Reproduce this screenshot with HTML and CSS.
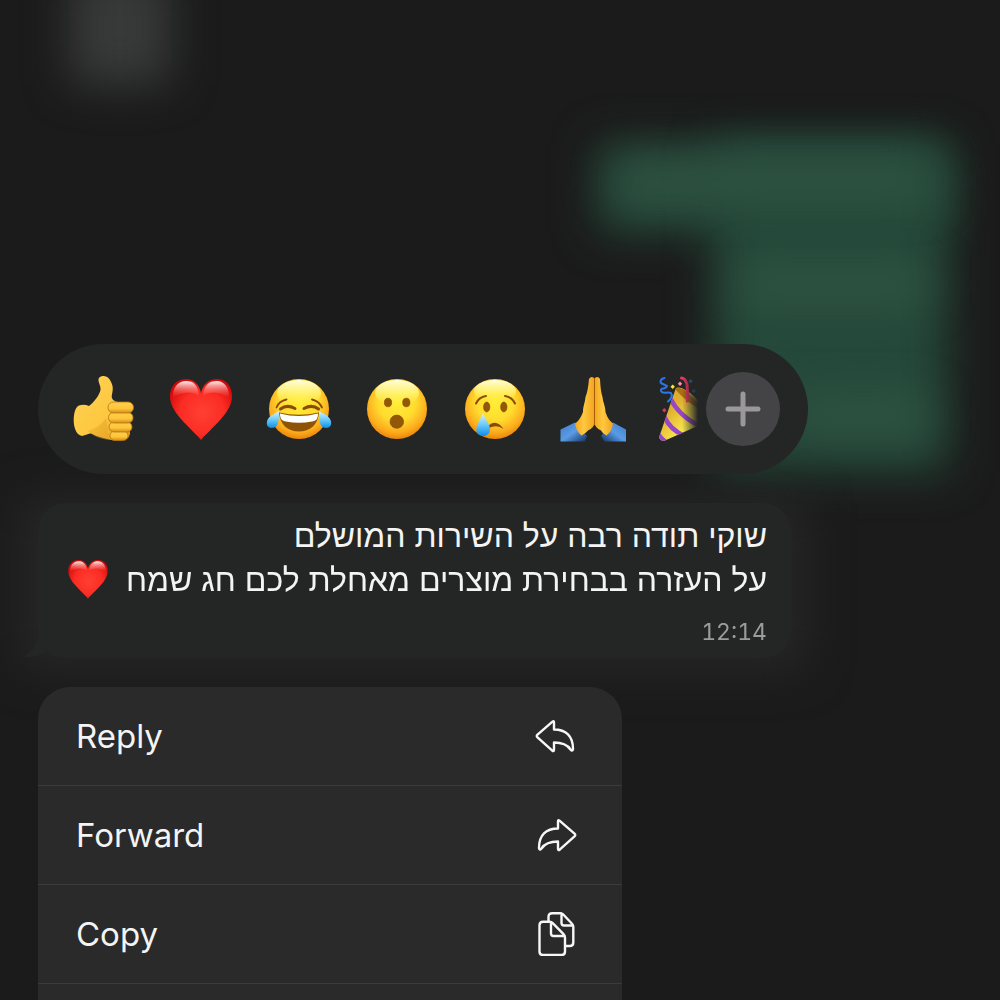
FILE: index.html
```html
<!DOCTYPE html>
<html lang="en">
<head>
<meta charset="utf-8">
<meta name="viewport" content="width=device-width, initial-scale=1">
<title>Message actions</title>
<link rel="stylesheet" href="styles.css">
</head>
<body>
<div class="backdrop" aria-hidden="true">
  <div class="blur blur-grey"></div>
  <div class="blur blur-sent blur-sent-wide"></div>
  <div class="blur blur-sent blur-sent-tall"></div>
  <div class="blur blur-band blur-band-one"></div>
  <div class="blur blur-band blur-band-two"></div>
  <div class="blur blur-band blur-band-three"></div>
  <div class="blur blur-message"></div>
</div>

<svg class="defs" aria-hidden="true">
  <defs>
    <radialGradient id="face" cx=".5" cy=".38" r=".64">
      <stop offset="0" stop-color="#ffee38"/><stop offset=".5" stop-color="#ffdb2e"/><stop offset=".8" stop-color="#fcab1c"/><stop offset="1" stop-color="#ea7d08"/>
    </radialGradient>
    <linearGradient id="shine" x1="0" y1="0" x2="0" y2="1">
      <stop offset="0" stop-color="#fffee0"/><stop offset=".5" stop-color="#fff98a" stop-opacity=".7"/><stop offset="1" stop-color="#fff04a" stop-opacity="0"/>
    </linearGradient>
    <linearGradient id="tear" x1="0" y1="0" x2="0" y2="1">
      <stop offset="0" stop-color="#d5f6ff"/><stop offset=".5" stop-color="#6ecbf8"/><stop offset="1" stop-color="#0a8fe8"/>
    </linearGradient>
    <radialGradient id="red" cx=".52" cy=".55" r=".6">
      <stop offset="0" stop-color="#ff4034"/><stop offset=".6" stop-color="#fb2c24"/><stop offset="1" stop-color="#d40808"/>
    </radialGradient>
    <linearGradient id="gloss" x1="0" y1="0" x2="0" y2="1">
      <stop offset="0" stop-color="#fff" stop-opacity=".95"/><stop offset="1" stop-color="#ff6a60" stop-opacity="0"/>
    </linearGradient>
    <linearGradient id="skin" x1="0" y1="0" x2="1" y2="1">
      <stop offset="0" stop-color="#ffd257"/><stop offset=".6" stop-color="#fdc840"/><stop offset="1" stop-color="#dd930f"/>
    </linearGradient>
    <linearGradient id="finger" x1="0" y1="0" x2="0" y2="1">
      <stop offset="0" stop-color="#ffd04a"/><stop offset=".6" stop-color="#fdc53b"/><stop offset="1" stop-color="#d58b12"/>
    </linearGradient>
    <linearGradient id="palm" x1="0" y1="0" x2="1" y2="0">
      <stop offset="0" stop-color="#f3a51c"/><stop offset=".45" stop-color="#ffc841"/><stop offset="1" stop-color="#f2a41c"/>
    </linearGradient>
    <linearGradient id="sleeve-left" x1="0" y1="0" x2="1" y2="1">
      <stop offset="0" stop-color="#3f7cc6"/><stop offset=".5" stop-color="#5a9be6"/><stop offset="1" stop-color="#12305f"/>
    </linearGradient>
    <linearGradient id="sleeve-right" x1="1" y1="0" x2="0" y2="1">
      <stop offset="0" stop-color="#3f7cc6"/><stop offset=".5" stop-color="#5a9be6"/><stop offset="1" stop-color="#12305f"/>
    </linearGradient>
    <linearGradient id="cone" x1="0" y1="0" x2="1" y2="1">
      <stop offset="0" stop-color="#d49a24"/><stop offset=".35" stop-color="#e0b030"/><stop offset=".65" stop-color="#fff052"/><stop offset="1" stop-color="#c48d1c"/>
    </linearGradient>
    <clipPath id="cone-shape"><path d="M1.500 60 L17.500 13 C20 9 30 14 40 24 C51 35 55 43 49 46 L7 64.500 C3 65.500 .5 63 1.500 60Z"/></clipPath>
    <symbol id="heart" viewBox="0 0 66 66">
      <path fill="url(#red)" d="M33 64 C31 61 22 53 13 43 C6 35 2 28 2 20 C2 10 9 3 18 3 C26 3 31 8 33 17 C35 8 41 3 49 3 C58 3 64 10 64 20 C64 28 60 35 53 43 C44 53 35 61 33 64Z"/>
      <path fill="url(#gloss)" d="M5 22 C4 12 10 5 18 5 C26 5 30 9 31 20 C24 14 12 16 5 22Z"/>
      <path fill="url(#gloss)" d="M61 22 C62 12 56 5 49 5 C41 5 36 9 35 20 C42 14 54 16 61 22Z"/>
    </symbol>
  </defs>
</svg>

<main class="page">
  <section class="reactions" aria-label="Reactions">
    <div class="reaction-list">
      <button class="reaction" type="button" aria-label="Thumbs up">
        <svg viewBox="0 0 66 66">
          <path fill="url(#skin)" d="M9 29.500 Q14 28 19 30 C24 26 29 20 30.500 14 C31 10 28.500 7 28.500 4 C28.500 1 31 0 33.500 0 C38 0 41 4 42.500 10 C43.500 15 41 20 42 22 Q43 25 48 26 L59 26 L60 58 Q59 64 50 64.500 C42 65 34 62 30 61 C25 60 23 57.500 20 57.500 L12 60 C1 58 2 32 9 29.500Z"/>
          <path fill="#e3a22a" opacity=".45" d="M18 55 Q29 52 36 42 L39 64 Q24 62 18 55Z"/>
          <g fill="url(#finger)" stroke="#b87312" stroke-width=".8">
            <rect x="40" y="55" width="18" height="9.500" rx="4.700"/><rect x="39" y="46" width="23" height="10" rx="5"/><rect x="38.500" y="36.500" width="24.500" height="10.500" rx="5"/><rect x="38" y="26" width="25.500" height="11" rx="5.400"/>
          </g>
        </svg>
      </button>
      <button class="reaction" type="button" aria-label="Heart"><svg viewBox="0 0 66 66"><use href="#heart"/></svg></button>
      <button class="reaction" type="button" aria-label="Tears of joy">
        <svg viewBox="0 0 66 66">
          <circle cx="33" cy="33" r="30" fill="url(#face)"/><ellipse cx="33" cy="17" rx="22" ry="13" fill="url(#shine)"/>
          <path fill="#8f5305" d="M13 36.500 Q33 41 53 36.500 C52 49 44 55.500 33 55.500 C22 55.500 14 49 13 36.500Z"/>
          <path fill="#fff" d="M14 37.500 Q33 42.500 52 37.500 C52 43 50 45 46 45.500 Q33 48 20 45.500 C16 45 14 43 14 37.500Z"/>
          <g fill="none" stroke="#8a4b06" stroke-linecap="round"><path stroke-width="3" d="M14.500 33 Q21 28 29 32.500 M38 32.500 Q46 28 52.500 33"/><path stroke-width="1.800" d="M10.500 31.500 Q13 25 20.500 23.500 M46 23.500 Q53 25 56 31.500"/></g>
          <path fill="url(#tear)" d="M13 35 C13 43 13 52 6 52 C0 52 0 46 2 43 C4 39 9 38 13 35Z"/><path fill="url(#tear)" d="M53 35 C53 43 53 52 60 52 C66 52 66 46 64 43 C62 39 57 38 53 35Z"/>
        </svg>
      </button>
      <button class="reaction" type="button" aria-label="Surprised">
        <svg viewBox="0 0 66 66">
          <circle cx="33" cy="33" r="30" fill="url(#face)"/><ellipse cx="33" cy="17" rx="22" ry="13" fill="url(#shine)"/>
          <g fill="#925807" stroke="#7c4503" stroke-width=".6"><ellipse cx="24" cy="26.500" rx="3.600" ry="4.300"/><ellipse cx="42.300" cy="26.500" rx="3.600" ry="4.300"/><ellipse cx="32.800" cy="45.700" rx="6.800" ry="6.600"/></g>
        </svg>
      </button>
      <button class="reaction" type="button" aria-label="Crying">
        <svg viewBox="0 0 66 66">
          <circle cx="33" cy="33" r="30" fill="url(#face)"/><ellipse cx="33" cy="15" rx="21" ry="11" fill="url(#shine)"/>
          <g fill="#925807" stroke="#7c4503" stroke-width=".5"><ellipse cx="24.700" cy="31" rx="3.200" ry="5"/><ellipse cx="41.800" cy="31" rx="3.200" ry="5"/></g>
          <path fill="none" stroke="#8a4b06" stroke-width="2" stroke-linecap="round" d="M14 27.500 Q17 21 24 20 M43 20 Q50 21 53 27.500"/>
          <path fill="#8a4b06" d="M26 50 Q34 42 41.500 53 Q35 48 27 52Z"/>
          <path fill="url(#tear)" d="M21 37 C23 43 28 48 28 53.500 C28 57.500 25 60 21.200 60 C17.500 60 14.300 57.500 14.300 53.500 C14.300 48 19 43 21 37Z"/>
        </svg>
      </button>
      <button class="reaction" type="button" aria-label="Folded hands">
        <svg viewBox="0 0 66 66">
          <path fill="url(#sleeve-left)" d="M.5 53.500 L15 46.500 L27 60 L25 65.500 H.5Z"/><path fill="url(#sleeve-right)" d="M66 53.500 L53 46.500 L41 60 L44.500 65.500 H66Z"/>
          <path fill="url(#palm)" d="M29 3 Q31 -.5 34 2 L34.500 47 Q34 52 28 54.500 Q26 57 21.500 59.500 Q16 55 15 47.500 Q20 44 23 36 C23 30 25 27 25.500 21 Q28 15 29 3Z"/>
          <path fill="url(#palm)" d="M40 3 Q38 -.5 35 2 L34.500 47 Q35 52 41 54.500 Q42 57 46.500 59.500 Q52 55 53 47.500 Q48 44 45.500 36 C45.500 30 43 27 42.500 21 Q40.500 15 40 3Z"/>
          <path fill="none" stroke="#a65d08" stroke-width="1" d="M34.500 2 V49"/>
        </svg>
      </button>
      <button class="reaction" type="button" aria-label="Party popper">
        <svg viewBox="0 0 66 66">
          <g clip-path="url(#cone-shape)"><path fill="url(#cone)" d="M0 0 H66 V66 H0Z"/><path fill="none" stroke="#9547c8" stroke-width="4.500" d="M12 22 Q22 42 46 52 M6 40 Q12 54 27 60 M-2 55 Q2 62 9 67"/><path fill="#a96f11" d="M17 13 Q22 10 30 17 Q38 24 44 34 Q30 28 17 13Z"/></g>
          <path fill="none" stroke="#2877ee" stroke-width="2" stroke-linecap="round" d="M6.500 2 C2 3 1 7 5 8 L9 10 C8 14 2 11 3 15 C5 19 9 15 13 17 C15 20 13 23 10 25.500"/>
          <path fill="none" stroke="#ee3561" stroke-width="3" stroke-linecap="round" d="M23.500 2 Q27 2 29 8 Q30 16 29.300 25"/>
          <path fill="#f7e92c" d="m14.700 8.500 2.200 2.200-2.200 2.200-2.200-2.200z"/><path fill="#ff8bb1" d="m22 5.500 2.200 2.200L22 9.900l-2.200-2.200z"/><path fill="#3471bd" d="m32.700 3.100 2.200 2.200-2.200 2.200-2.200-2.200zM36 12.800l2.200 2.200-2.200 2.200-2.200-2.200z"/><path fill="#cf3b65" d="m6.300 32.100 2.200 2.200-2.200 2.200-2.200-2.200z"/>
        </svg>
      </button>
    </div>
    <button class="more" type="button" aria-label="More reactions"><svg viewBox="0 0 74 74"><path d="M37 22 V52 M22 37 H52"/></svg></button>
  </section>

  <article class="bubble" lang="he" dir="rtl">
    <svg class="tail" viewBox="0 0 32 24" aria-hidden="true"><path d="M14 0 C14 11 8 16 0 23 C10 24 18 21 23 17 Q27 23 32 22 V0Z"/></svg>
    <p class="text">שוקי תודה רבה על השירות המושלם<br>על העזרה בבחירת מוצרים מאחלת לכם חג שמח <svg class="inline-heart" viewBox="0 0 66 66" role="img" aria-label="❤️"><use href="#heart"/></svg></p>
    <time class="time" datetime="12:14">12:14</time>
  </article>

  <menu class="menu">
    <li><button class="action" type="button">Reply
      <svg viewBox="0 0 44 44" aria-hidden="true"><path d="M3.500 20.600 18.500 7.600 Q20 6.500 20 8.500 V15.500 C32 15.500 39 22 39 35 Q38.500 38 36.500 35.500 C33 30 28 28.500 20 28.500 V35.500 Q20 38 18.300 36.700 L3.500 23.300 Q2 22 3.500 20.600Z"/></svg></button></li>
    <li><button class="action" type="button">Forward
      <svg viewBox="0 0 44 44" aria-hidden="true"><path d="M40.500 20.600 25.500 7.600 Q24 6.500 24 8.500 V15.500 C12 15.500 5 22 5 35 Q5.500 38 7.500 35.500 C11 30 16 28.500 24 28.500 V35.500 Q24 38 25.700 36.700 L40.500 23.300 Q42 22 40.500 20.600Z"/></svg></button></li>
    <li><button class="action" type="button">Copy
      <svg viewBox="0 0 44 44" aria-hidden="true"><path d="M14.500 9.500 V5 Q14.500 1.200 18.300 1.200 H26 Q28 1.200 29.500 2.700 L37.800 11.500 Q39.300 13 39.300 15 V30.500 Q39.300 34 35.800 34 H31.500 M27.500 1.500 V11 Q27.500 13.500 30 13.500 H39"/><path d="M9 9.800 H15.500 Q17.500 9.800 19 11.300 L29.500 22.200 Q31 23.700 31 25.700 V39.500 Q31 43 27.500 43 H9 Q5.500 43 5.500 39.500 V13.300 Q5.500 9.800 9 9.800Z M17 10.500 V21.500 Q17 24 19.500 24 H30.500"/></svg></button></li>
  </menu>
</main>
</body>
</html>
```
FILE: styles.css
```css
* { box-sizing: border-box; }

body {
  margin: 0;
  background: #1b1b1b;
  color: #f4f4f4;
  font-family: Inter, "Liberation Sans", sans-serif;
}

button {
  padding: 0;
  border: 0;
  background: none;
  color: inherit;
  font: inherit;
}

svg { display: block; }

.defs {
  position: absolute;
  width: 0;
  height: 0;
}

/* Blurred conversation behind the overlay */
.backdrop {
  position: fixed;
  inset: 0;
  overflow: hidden;
}

.blur {
  position: absolute;
  filter: blur(22px);
}

.blur-grey { left: 70px; top: -30px; width: 100px; height: 114px; background: #383a39; }
.blur-sent { right: 52px; background: #25493a; }
.blur-sent-wide { top: 144px; width: 350px; height: 88px; }
.blur-sent-tall { top: 144px; width: 235px; height: 328px; }
.blur-band { right: 72px; height: 30px; background: #335746; }
.blur-band-one { top: 166px; width: 310px; }
.blur-band-two { top: 270px; width: 190px; }
.blur-band-three { top: 400px; width: 130px; }
.blur-message { left: 20px; top: 498px; width: 786px; height: 172px; background: #262626; }

.page {
  position: relative;
  display: flex;
  flex-direction: column;
  gap: 29px;
  min-height: 100vh;
  padding: 344px 38px 0;
}

.reactions {
  display: flex;
  align-items: center;
  gap: 6px;
  width: 100%;
  max-width: 770px;
  padding: 28px 28px 28px 32px;
  border-radius: 65px;
  background: #242625;
}

.reaction-list {
  display: flex;
  flex: 1;
  gap: 32px;
  min-width: 0;
  overflow: hidden;
  -webkit-mask-image: linear-gradient(to left, transparent 2px, #000 18px);
  mask-image: linear-gradient(to left, transparent 2px, #000 18px);
}

.reaction {
  flex: none;
  width: 66px;
  height: 66px;
}

.more {
  flex: none;
  width: 74px;
  height: 74px;
  border-radius: 50%;
  background: #444446;
}

.more path {
  fill: none;
  stroke: #9a9899;
  stroke-width: 5;
  stroke-linecap: round;
}

.bubble {
  position: relative;
  display: flex;
  flex-direction: column;
  gap: 16px;
  width: 100%;
  max-width: 753px;
  padding: 11px 24px 12px;
  border-radius: 28px;
  background: #242625;
}

.tail {
  position: absolute;
  left: -14px;
  bottom: 0;
  width: 32px;
  height: 24px;
  fill: #242625;
}

.text {
  margin: 0;
  font-family: "Liberation Sans", sans-serif;
  font-size: 32px;
  line-height: 44px;
}

.inline-heart {
  display: inline-block;
  width: 42px;
  height: 42px;
  margin-right: 8px;
  vertical-align: -9px;
}

.time {
  color: #9b9c9b;
  font-size: 23px;
  font-variant-numeric: tabular-nums;
  line-height: 28px;
}

.menu {
  flex: 1;
  width: 100%;
  max-width: 584px;
  margin: 0;
  padding: 0;
  border-radius: 32px 32px 0 0;
  background: #2a2a2a;
  list-style: none;
}

.menu li { border-bottom: 1px solid #3b3b3b; }

.action {
  display: flex;
  align-items: center;
  justify-content: space-between;
  width: 100%;
  height: 98px;
  padding: 0 44px 0 38px;
  font-size: 33px;
}

.action svg {
  width: 44px;
  height: 44px;
  fill: none;
  stroke: #f7f7f7;
  stroke-width: 2.4;
  stroke-linejoin: round;
  stroke-linecap: round;
}
```
